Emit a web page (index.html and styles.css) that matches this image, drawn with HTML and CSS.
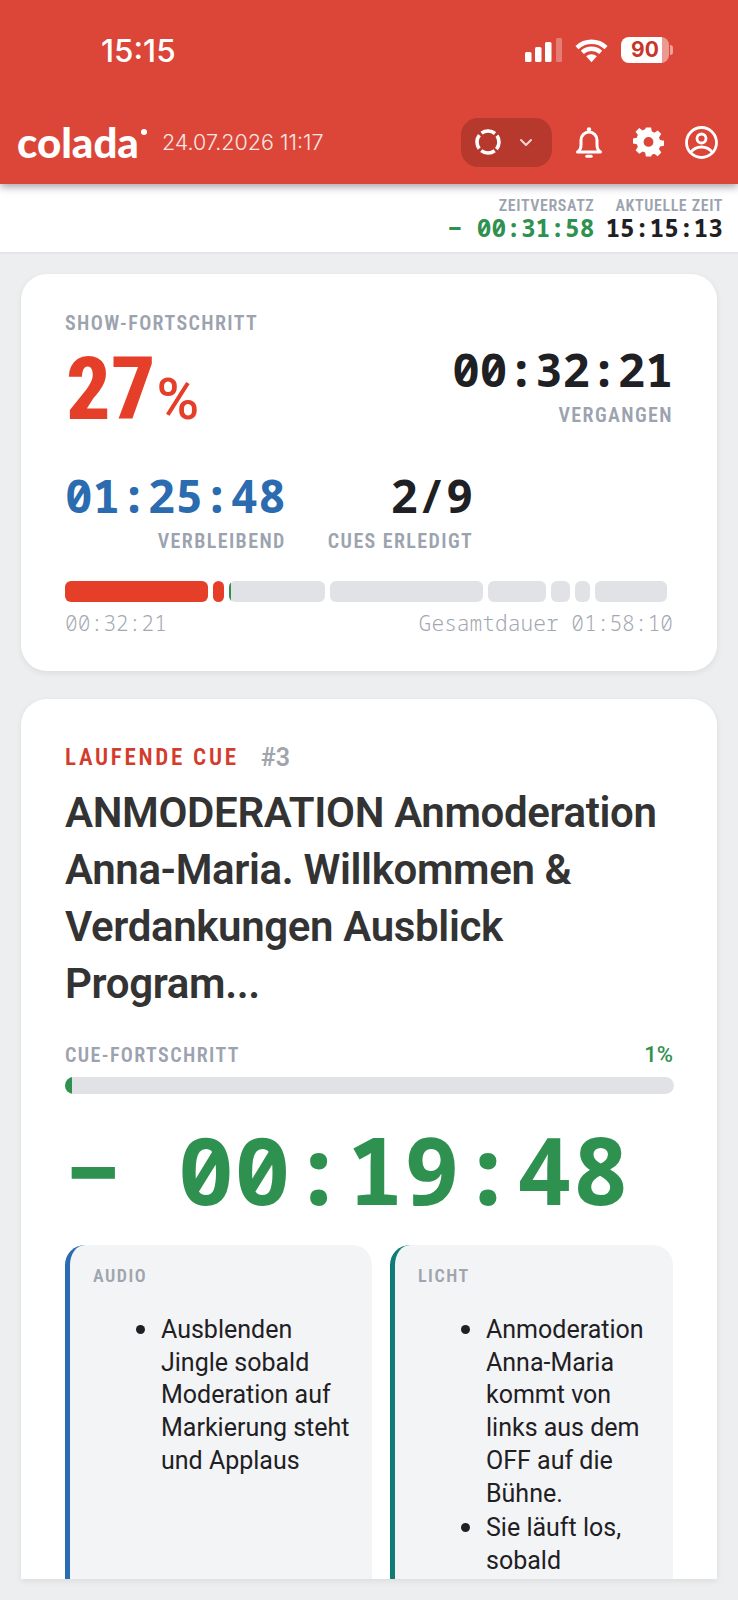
FILE: index.html
```html
<!DOCTYPE html>
<html lang="de">
<head>
  <meta charset="UTF-8">
  <title>colada</title>
  <link rel="stylesheet" href="styles.css">
</head>
<body>
  <header class="topbar">
    <div class="status">
      <span class="clock">15:15</span>
      <div class="status-icons">
        <svg width="37" height="24" viewBox="0 0 37 24" fill="#fff">
          <rect x="0" y="14" width="6.500" height="10" rx="1.500"/>
          <rect x="10" y="9" width="6.500" height="15" rx="1.500"/>
          <rect x="20" y="4" width="6.500" height="20" rx="1.500"/>
          <rect x="31" y="0" width="6" height="24" rx="1.500" opacity=".3"/>
        </svg>
        <svg width="33" height="25" viewBox="0 0 34 25">
          <path d="M2 9.500C10.500 1.500 23.500 1.500 32 9.500M7.500 14.500C13 9.500 21 9.500 26.500 14.500" fill="none" stroke="#fff" stroke-width="4.500"/>
          <path d="M11.500 18.500C14.800 15.700 19.200 15.700 22.500 18.500L17 24.500Z" fill="#fff"/>
        </svg>
        <span class="battery">90</span>
      </div>
    </div>
    <nav class="nav">
      <span class="logo">colada<i class="logo-dot"></i></span>
      <span class="nav-date">24.07.2026 11:17</span>
      <button class="pill">
        <svg class="ring" width="26" height="26" viewBox="0 0 26 26" fill="none" stroke="#fff" stroke-width="3.600">
          <circle cx="13" cy="13" r="11" stroke-dasharray="14.300 3" stroke-dashoffset="-1.500" transform="rotate(45 13 13)"/>
        </svg>
        <svg width="14" height="9" viewBox="0 0 14 9" fill="none" stroke="#f6d5d1" stroke-width="2" stroke-linecap="round" stroke-linejoin="round">
          <path d="M2 2l5 5 5-5"/>
        </svg>
      </button>
      <svg class="bell" width="26" height="31" viewBox="0 0 26 31" fill="none" stroke="#fff" stroke-width="3" stroke-linejoin="round">
        <path d="M1.500 25c2.300-1.500 3.500-3.500 3.500-7v-5a8 8 0 0 1 16 0v5c0 3.500 1.200 5.500 3.500 7z"/>
        <circle cx="13" cy="2.500" r="2.200" fill="#fff" stroke="none"/>
        <path d="M10.800 29.300h4.400" stroke-linecap="round"/>
      </svg>
      <svg class="gear" width="31" height="32" viewBox="0 0 24 24.500" fill="#fff">
        <path fill-rule="evenodd" d="M10 1h4l.6 3.100c.7.2 1.300.5 1.900.9l2.700-1.700 2.700 2.800-1.800 2.600c.4.600.6 1.300.8 2l3.100.6v3.900l-3.100.6c-.2.700-.4 1.300-.8 1.900l1.800 2.700-2.800 2.800-2.600-1.800c-.6.400-1.300.6-1.900.8L14 23.500h-4l-.6-3.100c-.7-.2-1.300-.4-1.900-.8l-2.700 1.800L2 18.600l1.800-2.700c-.4-.6-.6-1.200-.8-1.900L0 13.400V9.500l3-.6c.2-.7.4-1.400.8-2L2 4.300 4.800 1.500l2.700 1.800c.6-.4 1.200-.7 1.900-.9zM12 8.400a3.800 3.800 0 1 0 0 7.600 3.800 3.800 0 0 0 0-7.600z"/>
      </svg>
      <svg class="user" width="33" height="33" viewBox="0 0 33 33" fill="none" stroke="#fff" stroke-width="2.800">
        <circle cx="16.500" cy="16.500" r="15"/>
        <circle cx="16.500" cy="12.500" r="4.500"/>
        <path d="M5.500 26.500c3-4 7-5.500 11-5.500s8 1.500 11 5.500"/>
      </svg>
    </nav>
  </header>

  <section class="offset-bar">
    <div class="offset-col">
      <span class="offset-label">ZEITVERSATZ</span>
      <span class="offset-value green">− 00:31:58</span>
    </div>
    <div class="offset-col">
      <span class="offset-label">AKTUELLE ZEIT</span>
      <span class="offset-value">15:15:13</span>
    </div>
  </section>

  <main class="content">
    <section class="card">
      <div class="label">SHOW-FORTSCHRITT</div>
      <div class="show-top">
        <div class="percent">27<span class="percent-sign">%</span></div>
        <div class="stat">
          <div class="time">00:32:21</div>
          <div class="label">VERGANGEN</div>
        </div>
      </div>
      <div class="show-stats">
        <div class="stat">
          <div class="time blue">01:25:48</div>
          <div class="label">VERBLEIBEND</div>
        </div>
        <div class="stat">
          <div class="time">2/9</div>
          <div class="label">CUES ERLEDIGT</div>
        </div>
      </div>
      <div class="segments">
        <span class="seg done" style="width:143px"></span>
        <span class="seg done" style="width:11px"></span>
        <span class="seg" style="width:96px"><i class="seg-fill"></i></span>
        <span class="seg" style="width:153px"></span>
        <span class="seg" style="width:58px"></span>
        <span class="seg" style="width:19px"></span>
        <span class="seg" style="width:15px"></span>
        <span class="seg" style="width:72px"></span>
      </div>
      <div class="segments-foot">
        <span>00:32:21</span>
        <span>Gesamtdauer 01:58:10</span>
      </div>
    </section>

    <section class="card cue">
      <div class="cue-head">
        <span class="cue-tag">LAUFENDE CUE</span>
        <span class="cue-num">#3</span>
      </div>
      <h1 class="cue-title">ANMODERATION Anmoderation Anna-Maria. Willkommen &amp; Verdankungen Ausblick Program...</h1>
      <div class="cue-progress-head">
        <span class="label">CUE-FORTSCHRITT</span>
        <span class="cue-percent">1%</span>
      </div>
      <div class="cue-bar"><div class="cue-bar-fill" style="width:7px"></div></div>
      <div class="cue-timer">− 00:19:48</div>
      <div class="notes">
        <div class="note audio">
          <div class="note-label">AUDIO</div>
          <ul>
            <li>Ausblenden Jingle sobald Moderation auf Markierung steht und Applaus</li>
          </ul>
        </div>
        <div class="note light">
          <div class="note-label">LICHT</div>
          <ul>
            <li>Anmoderation Anna-Maria kommt von links aus dem OFF auf die Bühne.</li>
            <li>Sie läuft los, sobald sichtbar ist</li>
          </ul>
        </div>
      </div>
    </section>
  </main>
</body>
</html>
```

FILE: styles.css
```css
* {
  box-sizing: border-box;
}

html, body {
  margin: 0;
  height: 1600px;
  overflow: hidden;
}

body {
  display: flex;
  flex-direction: column;
  background-color: #eceef0;
  font-family: "Roboto", "Noto Sans", sans-serif;
  font-stretch: 85%;
  color: #1f2023;
}

.topbar {
  position: relative;
  z-index: 2;
  height: 184px;
  padding: 36px 20px 0 17px;
  background-color: #dc4639;
  box-shadow: 0 3px 8px rgba(0,0,0,.35);
  color: #fff;
}

.status {
  display: flex;
  justify-content: space-between;
  align-items: center;
  height: 28px;
  padding: 0 49px 0 84px;
}

.clock {
  font-family: "Inter", sans-serif;
  font-size: 31.500px;
  font-weight: 500;
}

.status-icons {
  display: flex;
  align-items: center;
  gap: 13px;
}

.battery {
  position: relative;
  width: 48px;
  height: 26px;
  border-radius: 8px;
  background: linear-gradient(90deg, #fff 86%, rgba(255,255,255,.45) 86%);
  color: #c9352b;
  font-family: "Inter", sans-serif;
  font-size: 21px;
  font-weight: 700;
  line-height: 26px;
  text-align: center;
}

.battery::after {
  content: "";
  position: absolute;
  top: 8px;
  right: -4px;
  width: 3px;
  height: 10px;
  border-radius: 0 3px 3px 0;
  background-color: rgba(255,255,255,.5);
}

.nav {
  display: flex;
  align-items: center;
  height: 48px;
  margin-top: 54px;
}

.logo {
  position: relative;
  padding-right: 8px;
  font-family: "Lato", sans-serif;
  font-size: 42px;
  font-weight: 900;
  line-height: 48px;
}

.logo-dot {
  position: absolute;
  top: 11px;
  right: 0;
  width: 6px;
  height: 6px;
  border-radius: 50%;
  background-color: #fff;
}

.nav-date {
  margin-left: 15px;
  font-family: "Inter", sans-serif;
  font-size: 21.500px;
  font-weight: 300;
  color: #fbe6e3;
}

.pill {
  display: flex;
  align-items: center;
  gap: 18px;
  flex: none;
  width: 91px;
  height: 49px;
  margin-left: auto;
  padding: 0 0 0 14px;
  border: 0;
  border-radius: 17px;
  background-color: #b7392e;
}

.bell {
  flex: none;
  margin-left: 24px;
}

.gear {
  flex: none;
  margin-left: 31px;
}

.user {
  flex: none;
  margin-left: 21px;
}

.offset-bar {
  display: flex;
  justify-content: flex-end;
  gap: 11px;
  height: 70px;
  padding: 14px 15px 0 0;
  background-color: #fff;
  border-bottom: 2px solid #e3e5e8;
}

.offset-col {
  display: flex;
  flex-direction: column;
  align-items: flex-end;
}

.offset-label {
  font-size: 16px;
  font-weight: 600;
  line-height: 16px;
  letter-spacing: .6px;
  color: #9ca3af;
}

.offset-value {
  font-family: "Noto Sans Mono", "DejaVu Sans Mono", monospace;
  font-size: 24.500px;
  font-weight: 700;
  line-height: 28px;
}

.green {
  color: #2f9150;
}

.blue {
  color: #2b6cb0;
}

.content {
  display: flex;
  flex-direction: column;
  gap: 28px;
  height: 1325px;
  padding: 20px 21px 0;
}

.card {
  padding: 38px 44px 0;
  height: 397px;
  flex: none;
  border-radius: 26px;
  background-color: #fff;
  box-shadow: 0 2px 6px rgba(0,0,0,.08);
}

.label {
  font-size: 20px;
  font-weight: 600;
  line-height: 22px;
  letter-spacing: 1.400px;
  color: #9ca3af;
}

.show-top {
  display: flex;
  justify-content: space-between;
  align-items: flex-start;
  margin-top: 6px;
}

.percent {
  margin-left: 1px;
  padding-top: 4px;
  font-size: 88px;
  font-stretch: 75%;
  font-weight: 800;
  line-height: 90px;
  color: #e53e29;
}

.percent-sign {
  margin-left: 1px;
  font-size: 58px;
  font-stretch: 100%;
  font-weight: 500;
}

.stat {
  text-align: right;
}

.time {
  font-family: "Noto Sans Mono", "DejaVu Sans Mono", monospace;
  font-size: 46px;
  font-weight: 700;
  line-height: 52px;
}

.show-top .time {
  margin-top: 3px;
}

.stat .label {
  margin-top: 9px;
}

.show-stats {
  display: flex;
  gap: 42px;
  margin-top: 25px;
}

.segments {
  display: flex;
  gap: 5px;
  height: 21px;
  margin-top: 29px;
}

.seg {
  flex: none;
  overflow: hidden;
  border-radius: 6px;
  background-color: #e0e2e6;
}

.seg.done {
  background-color: #e53e29;
}

.seg-fill {
  display: block;
  width: 2px;
  height: 100%;
  background-color: #2f9150;
}

.segments-foot {
  display: flex;
  justify-content: space-between;
  margin-top: 9px;
  font-family: "Noto Sans Mono", "Liberation Mono", monospace;
  font-size: 21.200px;
  font-weight: 300;
  line-height: 24px;
  color: #a3a8b0;
}

.cue {
  flex: 1;
  height: auto;
  min-height: 0;
  overflow: hidden;
  padding-top: 45px;
  border-radius: 26px 26px 0 0;
}

.cue-head {
  display: flex;
  gap: 22px;
  font-size: 23px;
  font-weight: 600;
  line-height: 28px;
}

.cue-tag {
  letter-spacing: 2.700px;
  color: #d33c2c;
}

.cue-num {
  font-size: 25px;
  font-stretch: 100%;
  color: #a0a5ad;
}

.cue-title {
  margin: 12px 0 0;
  font-size: 42px;
  font-stretch: 100%;
  font-weight: 600;
  line-height: 57px;
  letter-spacing: -.35px;
  color: #333;
}

.cue-progress-head {
  display: flex;
  justify-content: space-between;
  margin-top: 32px;
}

.cue-percent {
  font-size: 22px;
  font-stretch: 100%;
  font-weight: 500;
  line-height: 22px;
  color: #2f9150;
}

.cue-bar {
  height: 17px;
  margin: 11px -1px 0 0;
  overflow: hidden;
  border-radius: 9px;
  background-color: #e0e2e6;
}

.cue-bar-fill {
  height: 100%;
  background-color: #2f9150;
}

.cue-timer {
  margin-top: 20px;
  font-family: "Noto Sans Mono", "DejaVu Sans Mono", monospace;
  font-size: 94px;
  font-weight: 700;
  line-height: 110px;
  color: #2f9150;
  white-space: nowrap;
}

.notes {
  display: grid;
  grid-template-columns: 307px 283px;
  gap: 18px;
  margin-top: 21px;
}

.note {
  height: 500px;
  padding: 21px 14px 0 23px;
  border-left: 5px solid;
  border-radius: 20px;
  background-color: #f3f4f6;
}

.note.audio {
  border-color: #2b6cb0;
}

.note.light {
  padding-right: 24px;
  border-color: #0f7c76;
}

.note-label {
  font-size: 18px;
  font-weight: 600;
  line-height: 20px;
  letter-spacing: 1.500px;
  color: #a0a5ad;
}

.note ul {
  margin: 26px 0 0;
  padding-left: 68px;
  font-size: 25px;
  font-stretch: 100%;
  line-height: 32.700px;
}

.note li::marker {
  font-size: 30px;
}
```
